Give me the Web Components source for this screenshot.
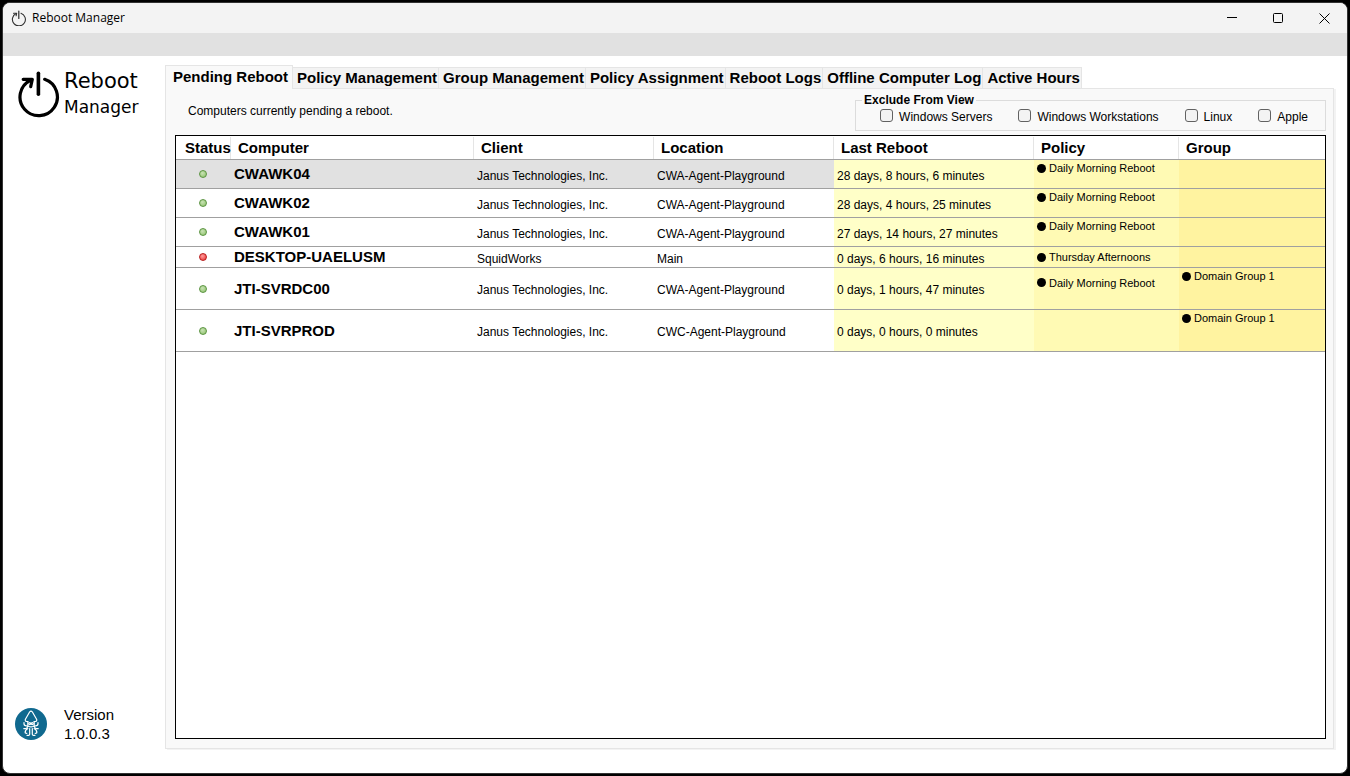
<!DOCTYPE html>
<html lang="en">
<head>
<meta charset="utf-8">
<title>Reboot Manager</title>
<style>
  html { height: 100%; }
  body {
    margin: 0;
    box-sizing: border-box;
    min-height: 100%;
    padding: 2px;
    display: flex;
    background: #000;
    color: #000;
    font: 12px/16px "Liberation Sans", Arial, sans-serif;
  }
</style>
</head>
<body>
<app-window>
  <title-bar slot="title">Reboot Manager</title-bar>
  <side-bar slot="side" version="1.0.0.3"></side-bar>
  <tab-view>
    <pending-header slot="header">Computers currently pending a reboot.</pending-header>
    <pending-table></pending-table>
  </tab-view>
</app-window>

<script>
const define = (name, html, setup) => {
  const template = document.createElement('template');
  template.innerHTML = html;
  customElements.define(name, class extends HTMLElement {
    constructor() {
      super();
      this.attachShadow({ mode: 'open' }).append(template.content.cloneNode(true));
    }
    connectedCallback() {
      if (setup && !this.ready) { this.ready = true; setup(this, this.shadowRoot); }
    }
  });
};

define('power-icon', `
<style>
  :host { display: block; }
  svg { display: block; width: 100%; height: 100%; }
</style>
<svg viewBox="0 0 42 46" fill="none" stroke="currentColor" stroke-width="3.2" stroke-linecap="round" stroke-linejoin="round" aria-hidden="true">
  <path d="M26.700 9.300A18.700 18.700 0 1 1 12.500 10.200"/>
  <path d="M20.400 3.200v21" stroke-width="3.600"/>
  <path d="M5.200 9.300L14.300 9.300L12.700 16.700"/>
</svg>`);

define('squid-badge', `
<style>
  :host { display: block; width: 32px; height: 32px; }
  svg { display: block; }
</style>
<svg width="32" height="32" viewBox="0 0 32 32" fill="none" stroke="#fff" stroke-width="1.200" stroke-linecap="round" stroke-linejoin="round" role="img" aria-label="SquidWorks">
  <circle cx="16" cy="16" r="16" fill="#10698f" stroke="none"/>
  <path d="M13 13.500H11.500Q9.800 13 10.400 11.200L14.600 4Q16 2.200 17.400 4L21.600 11.200Q22.200 13 20.500 13.500H19"/>
  <path d="M12.800 13.800v4M19.200 13.800v4"/>
  <circle cx="14.700" cy="15.600" r="1"/><circle cx="17.300" cy="15.600" r="1"/>
  <path d="M13.200 18.200Q16 19.600 18.800 18.200"/>
  <path d="M9 14.500v1.300q0 2 2.500 2M23 14.500v1.300q0 2-2.500 2"/>
  <path d="M8.800 20.600q3.700.5 3.700-2.400M23.200 20.600q-3.700.5-3.700-2.400"/>
  <path d="M12.800 20.500q-3 1.500-2.600 4.500l1.600.3M19.200 20.500q3 1.500 2.600 4.500l-1.600.3"/>
  <path d="M14.700 20.500v5.500q0 1.700-2.700 1.400M17.300 20.500v5.500q0 1.700 2.700 1.400"/>
</svg>`);

define('app-window', `
<style>
  :host {
    flex: 1;
    min-width: 0;
    display: flex;
    flex-direction: column;
    box-sizing: border-box;
    border: 1px solid #333;
    border-radius: 8px;
    overflow: hidden;
    background: #fff;
  }
  .menu { height: 23px; background: #e1e1e1; }
  .content { flex: 1; display: flex; }
  main { flex: 1; min-width: 0; display: flex; padding: 10px 13px 24px 0; }
</style>
<slot name="title"></slot>
<div class="menu"></div>
<div class="content">
  <slot name="side"></slot>
  <main><slot></slot></main>
</div>`);

define('title-bar', `
<style>
  :host { display: flex; height: 30px; background: #f3f3f3; font: 12px/16px "Open Sans", "Noto Sans", sans-serif; }
  h1 { flex: 1; margin: 0; padding-left: 8px; display: flex; align-items: center; gap: 5px; font: inherit; }
  power-icon { width: 16px; height: 16px; color: #333; }
  button { width: 46px; border: 0; padding: 0; background: none; display: grid; place-items: center; }
  svg { display: block; }
</style>
<h1><power-icon></power-icon><slot></slot></h1>
<button aria-label="Minimize"><svg width="10" height="10" stroke="#000"><path d="M0 4.500h10"/></svg></button>
<button aria-label="Maximize"><svg width="10" height="10" fill="none" stroke="#000"><rect x=".5" y=".5" width="9" height="9" rx="1"/></svg></button>
<button aria-label="Close"><svg width="11" height="11" stroke="#000"><path d="M.5.5l10 10M10.500.5l-10 10"/></svg></button>`);

define('side-bar', `
<style>
  :host { width: 162px; flex: none; display: flex; flex-direction: column; justify-content: space-between; box-sizing: border-box; padding: 12px 0 30px 12px; }
  .logo { display: flex; gap: 4px; padding-left: 3px; font: 17px/26px "DejaVu Sans", sans-serif; }
  .logo power-icon { width: 42px; height: 50px; }
  .logo strong { display: block; font-size: 21px; font-weight: 400; }
  .logo span { display: block; }
  .about { display: flex; align-items: center; gap: 17px; font-size: 15px; line-height: 19px; }
</style>
<div class="logo"><power-icon></power-icon><div><strong>Reboot</strong><span>Manager</span></div></div>
<div class="about"><squid-badge></squid-badge><div>Version<br><span class="version"></span></div></div>`,
(host, root) => { root.querySelector('.version').textContent = host.getAttribute('version'); });

define('tab-view', `
<style>
  :host { flex: 1; min-width: 0; display: flex; flex-direction: column; }
  nav { display: flex; align-items: flex-end; height: 22px; }
  button {
    flex: none;
    height: 21px;
    padding: 0 1px 0 4px;
    border: 1px solid #e5e5e5;
    border-left: 0;
    border-bottom: 0;
    background: #f3f3f3;
    color: #000;
    font: bold 15px/20px "Liberation Sans", Arial, sans-serif;
    white-space: nowrap;
  }
  button[aria-selected=true] { height: 24px; margin-bottom: -1px; padding: 0 4px 2px 7px; border-left: 1px solid #e5e5e5; background: #f9f9f9; position: relative; }
  section {
    flex: 1;
    display: flex;
    flex-direction: column;
    padding: 0 7px 9px 9px;
    border: 1px solid #e5e5e5;
    box-shadow: 2px 1px #f3f3f3;
    background: #f9f9f9;
  }
</style>
<nav role="tablist">
  <button role="tab" aria-selected="true">Pending Reboot</button>
  <button role="tab">Policy Management</button>
  <button role="tab">Group Management</button>
  <button role="tab">Policy Assignment</button>
  <button role="tab">Reboot Logs</button>
  <button role="tab">Offline Computer Log</button>
  <button role="tab">Active Hours</button>
</nav>
<section role="tabpanel"><slot name="header"></slot><slot></slot></section>`);

define('check-option', `
<style>
  :host { display: block; }
  label { display: flex; align-items: center; gap: 6px; white-space: nowrap; }
  input { appearance: none; box-sizing: border-box; width: 13px; height: 13px; margin: 0; border: 1px solid #626262; border-radius: 3px; background: #f3f3f3; }
  span { padding-top: 2px; }
</style>
<label><input type="checkbox"><span><slot></slot></span></label>`);

define('pending-header', `
<style>
  :host { display: flex; justify-content: space-between; height: 46px; }
  p { margin: 14px 0 0 13px; }
  fieldset { box-sizing: border-box; height: 37px; margin: 5px 0 0; padding: 0 17px 5px 24px; border: 1px solid #dcdcdc; }
  legend { margin-left: -18px; padding: 0 2px; font-weight: bold; line-height: 13px; }
  .options { display: flex; gap: 26px; height: 17px; align-items: center; }
</style>
<p><slot></slot></p>
<fieldset>
  <legend>Exclude From View</legend>
  <div class="options">
    <check-option>Windows Servers</check-option>
    <check-option>Windows Workstations</check-option>
    <check-option>Linux</check-option>
    <check-option>Apple</check-option>
  </div>
</fieldset>`);

define('pending-table', `
<style>
  :host { flex: 1; display: block; border: 1px solid #000; background: #fff; }
  table { width: 100%; table-layout: fixed; border-collapse: separate; border-spacing: 0; }
  th, td { padding: 0; border-bottom: 1px solid #a0a0a0; text-align: left; vertical-align: middle; white-space: nowrap; }
  th { height: 23px; padding-left: 7px; font-size: 15px; line-height: 16px; }
  thead th { background: linear-gradient(#e5e5e5, #e5e5e5) right bottom / 1px 22px no-repeat; }
  thead th:first-child { padding-left: 9px; }
  thead th:last-child { background: none; }
  td { height: 20px; padding: 0 0 0 3px; line-height: 14px; }
  tbody th { height: 20px; padding-left: 3px; }
  td.text { padding-top: 3px; height: 17px; }
  .selected { background: #e1e1e1; }
  .reboot { background: #ffffc8; }
  .policy { background: #fffab4; }
  .group { background: #fff3a0; }
  ul { margin: 0; padding: 0; list-style: none; font-size: 11px; line-height: 16px; }
  ul.two { min-height: 28px; }
  ul.three { min-height: 41px; }
  li { display: flex; align-items: center; gap: 3px; }
  li::before { content: ""; width: 9px; height: 9px; border-radius: 50%; background: #000; }
  .dot { display: block; box-sizing: border-box; width: 8px; height: 8px; margin-left: 20px; border: 1px solid #5a9440; border-radius: 50%; background: radial-gradient(circle at 40% 35%, #c8e2b4, #8cc068); }
  .offline { border-color: #b81c1c; background: radial-gradient(circle at 40% 35%, #ff9c9c, #e83030); }
</style>
<table>
  <colgroup><col style="width:55px"><col style="width:243px"><col style="width:180px"><col style="width:180px"><col style="width:200px"><col style="width:145px"><col></colgroup>
  <thead><tr><th>Status</th><th>Computer</th><th>Client</th><th>Location</th><th>Last Reboot</th><th>Policy</th><th>Group</th></tr></thead>
  <tbody></tbody>
</table>`,
(host, root) => {
  const janus = 'Janus Technologies, Inc.';
  const daily = 'Daily Morning Reboot';
  const rows = [
    ['online', 'CWAWK04', janus, 'CWA-Agent-Playground', '28 days, 8 hours, 6 minutes', daily, ''],
    ['online', 'CWAWK02', janus, 'CWA-Agent-Playground', '28 days, 4 hours, 25 minutes', daily, ''],
    ['online', 'CWAWK01', janus, 'CWA-Agent-Playground', '27 days, 14 hours, 27 minutes', daily, ''],
    ['offline', 'DESKTOP-UAELUSM', 'SquidWorks', 'Main', '0 days, 6 hours, 16 minutes', 'Thursday Afternoons', ''],
    ['online', 'JTI-SVRDC00', janus, 'CWA-Agent-Playground', '0 days, 1 hours, 47 minutes', daily, 'Domain Group 1'],
    ['online', 'JTI-SVRPROD', janus, 'CWC-Agent-Playground', '0 days, 0 hours, 0 minutes', '', 'Domain Group 1']
  ];
  const list = (item, size) => item ? `<ul class="${size}"><li>${item}</li></ul>` : '';
  root.querySelector('tbody').innerHTML = rows.map(([state, name, client, place, reboot, policy, group], i) => `
    <tr class="${i === 0 ? 'selected' : ''}">
      <td><span class="dot ${state}" role="img" aria-label="${state}"></span></td>
      <th scope="row">${name}</th>
      <td class="text">${client}</td>
      <td class="text">${place}</td>
      <td class="text reboot">${reboot}</td>
      <td class="policy">${list(policy, policy === daily ? 'two' : 'one')}</td>
      <td class="group">${list(group, 'three')}</td>
    </tr>`).join('');
});
</script>
</body>
</html>
